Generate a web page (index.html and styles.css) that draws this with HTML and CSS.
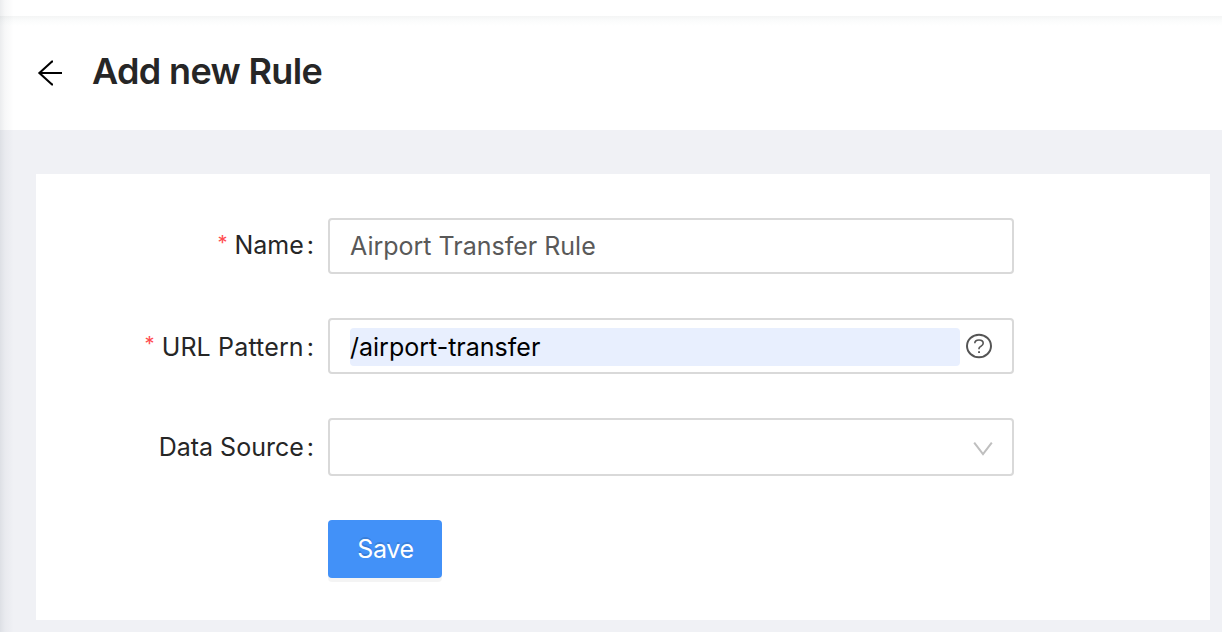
FILE: index.html
```html
<!DOCTYPE html>
<html lang="en">
<head>
<meta charset="utf-8">
<title>Add new Rule</title>
<link rel="stylesheet" href="styles.css">
</head>
<body>
<div class="topbar"></div>
<header class="page-header">
  <svg class="back" viewBox="0 0 26 26" fill="none" stroke="#000" stroke-width="2.1"><path d="M25 13H2M16 1.5h-1L2.4 13 15 24.5h1"/></svg>
  <h1 class="title">Add new Rule</h1>
</header>
<main class="content">
  <form class="card">
    <div class="row">
      <label class="label" for="name"><span class="star">*</span><span>Name</span><span class="colon">:</span></label>
      <div class="field"><input class="input" id="name" placeholder="Airport Transfer Rule"></div>
    </div>
    <div class="row">
      <label class="label lower" for="url"><span class="star">*</span><span class="label-url">URL Pattern</span><span class="colon">:</span></label>
      <div class="field">
        <input class="input filled" id="url" value="/airport-transfer">
        <svg class="help" viewBox="0 0 26 26" fill="none" stroke="#555" stroke-width="2"><ellipse cx="13" cy="13" rx="12" ry="11.2"/><path d="M8.8 10.3C8.8 8.3 10.6 7 13 7s4.2 1.4 4.2 3.3c0 1.6-1.1 2.5-2.5 3.1-1.2.5-1.7 1-1.7 2.1v.7" stroke-width="1.6"/><path d="M12.1 18.2h1.9v1.8h-1.9z" fill="#555" stroke="none"/></svg>
      </div>
    </div>
    <div class="row">
      <label class="label lower"><span>Data Source</span><span class="colon">:</span></label>
      <div class="field select"><svg class="chevron" viewBox="0 0 20 14" fill="none" stroke="#bfbfbf" stroke-width="2"><path d="M1.2.6 10 12 18.8.6"/></svg></div>
    </div>
    <button class="save" type="button">Save</button>
  </form>
</main>
<div class="side-shadow"></div>
</body>
</html>
```
FILE: styles.css
```css
* { box-sizing: border-box; }
body {
  margin: 0;
  height: 632px;
  overflow: hidden;
  background: #f0f1f5;
  color: #262626;
  font-family: Inter, "Liberation Sans", sans-serif;
  font-size: 25px;
  font-weight: 370;
}
.topbar { height: 16px; background: #fff; }
.page-header {
  height: 114px;
  padding-left: 37px;
  display: flex;
  align-items: center;
  gap: 29px;
  background: linear-gradient(#f4f5f5, #fbfcfc 5px, #fff 10px);
}
.back { width: 26px; height: 26px; }
.title {
  margin: 0;
  font-size: 36px;
  line-height: 44px;
  font-weight: 590;
  letter-spacing: -0.65px;
  white-space: nowrap;
  padding-bottom: 4px;
}
.content { padding: 44px 12px 12px 36px; }
.card {
  height: 446px;
  padding: 44px 0 0;
  background: #fff;
  display: flex;
  flex-direction: column;
  gap: 44px;
}
.row { display: flex; }
.label {
  width: 292px;
  height: 54px;
  padding-right: 14px;
  display: flex;
  justify-content: flex-end;
  align-items: center;
  white-space: nowrap;
}
.lower { height: 58px; margin-bottom: -2px; }
.label-url { letter-spacing: 0.15px; }
.star { color: #ff4d4f; font-size: 20px; margin: 0 7px 4px 0; }
.lower .star { margin-bottom: 6px; }
.colon { margin-left: 3px; }
.field {
  width: 686px;
  height: 56px;
  border: 2px solid #d9d9d9;
  border-radius: 4px;
  background: #fff;
  display: flex;
  align-items: center;
  padding: 0 20px;
}
.input {
  width: 100%;
  height: 38px;
  padding: 0 0 1px;
  border: 0;
  outline: 0;
  background: none;
  color: #000;
  font: inherit;
}
.input::placeholder { color: #595959; opacity: 1; }
.filled { width: 610px; margin-top: 2px; padding: 0; border-radius: 4px; background: #e8effe; }
.help { width: 26px; height: 26px; margin-left: 6px; flex: none; }
.select { height: 58px; justify-content: flex-end; padding: 3px 19px 0 20px; }
.chevron { width: 20px; height: 14px; }
.save {
  width: 114px;
  height: 58px;
  margin-left: 292px;
  padding: 0 0 0 1px;
  border: 0;
  border-radius: 4px;
  background: #4291f8;
  color: #fff;
  font: inherit;
  letter-spacing: -0.3px;
  text-shadow: 0 -2px 0 rgba(0, 0, 0, 0.12);
  box-shadow: 0 4px 0 rgba(0, 0, 0, 0.043);
}
.side-shadow {
  position: absolute;
  left: 0;
  top: 0;
  width: 14px;
  height: 632px;
  background: linear-gradient(90deg, rgba(0, 21, 41, 0.08), rgba(0, 21, 41, 0.03) 5px, transparent);
}
```
